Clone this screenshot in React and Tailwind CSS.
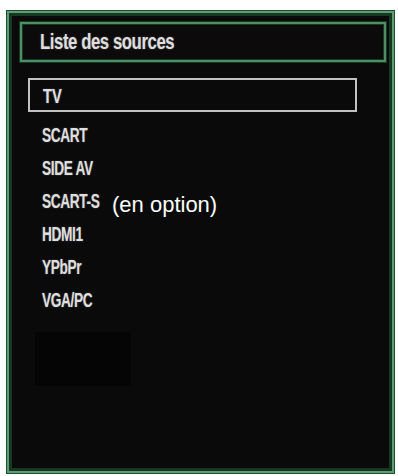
import React from 'react';

const sources = ['SCART', 'SIDE AV', 'SCART-S', 'HDMI1', 'YPbPr', 'VGA/PC'];

export default function App() {
  return (
    <div className="w-[398px] h-[476px] bg-white pt-[10px] pl-[6px]">
      {/* Outer frame */}
      <div className="w-[389px] h-[464px] border border-[#254a33]">
        <div className="h-full border-2 border-[#5c9e72]">
          <div className="h-full border-[3px] border-[#163823] bg-[#0a0a0a] flex flex-col font-['Liberation_Sans',Arial,sans-serif] text-[#dedede]">
            {/* Title */}
            <div className="ml-[8px] mt-[6px] w-[366px] h-[40px] border-2 border-[#4f8f64] shadow-[0_0_0_1px_#173a24,inset_0_0_0_1px_#173a24] bg-[#0c0a0a] flex items-center pl-[18px]">
              <span className="inline-block origin-left scale-x-[0.76] whitespace-nowrap text-[22px] font-bold tracking-tight leading-none [text-shadow:0_0_2px_rgba(255,255,255,0.35)]">Liste des sources</span>
            </div>

            {/* Selected */}
            <div className="ml-[16px] mt-[16px] w-[329px] h-[34px] border-2 border-[#c2c2c2] flex items-center pl-[13px]">
              <span className="inline-block origin-left scale-x-[0.7] text-[21px] font-bold leading-none [text-shadow:0_0_2px_rgba(255,255,255,0.35)]">TV</span>
            </div>

            {/* Items */}
            <div className="mt-[8px] ml-[30px] flex flex-col">
              {sources.map((s) => (
                <div key={s} className="h-[33px] flex items-center">
                  <div className="w-[70px] whitespace-nowrap">
                    <span className="inline-block origin-left scale-x-[0.65] text-[21px] font-bold tracking-tight leading-none [text-shadow:0_0_2px_rgba(255,255,255,0.35)]">{s}</span>
                  </div>
                  {s === 'SCART-S' && (
                    <span className="mt-[5px] text-[22px] leading-none text-white">(en option)</span>
                  )}
                </div>
              ))}
            </div>

            <div className="ml-[23px] mt-[14px] w-[96px] h-[54px] bg-[#050505]" />
          </div>
        </div>
      </div>
    </div>
  );
}
